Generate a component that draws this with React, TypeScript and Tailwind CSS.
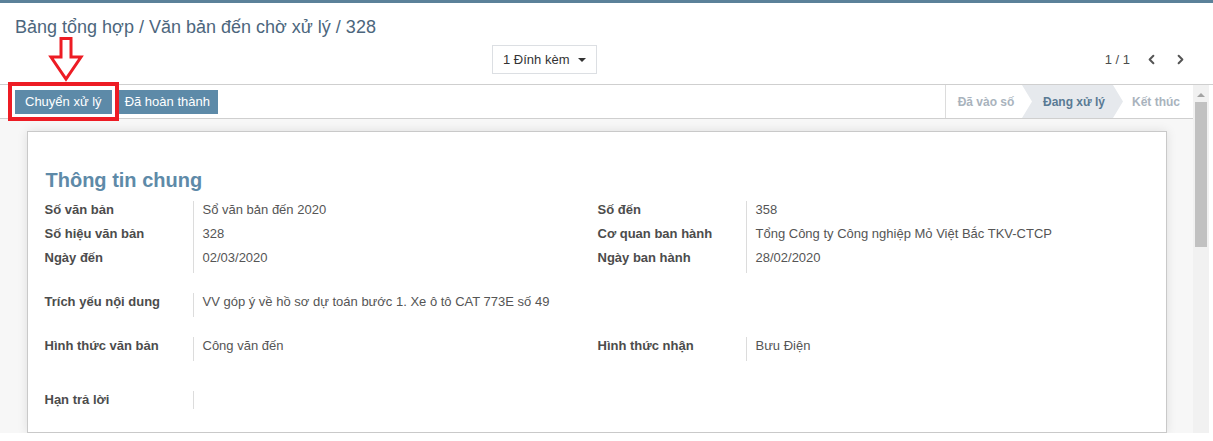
import { ChevronLeft, ChevronRight } from 'lucide-react'

const leftFields = [
  { label: 'Số văn bản', value: 'Sổ văn bản đến 2020' },
  { label: 'Số hiệu văn bản', value: '328' },
  { label: 'Ngày đến', value: '02/03/2020' },
]

const rightFields = [
  { label: 'Số đến', value: '358' },
  { label: 'Cơ quan ban hành', value: 'Tổng Công ty Công nghiệp Mỏ Việt Bắc TKV-CTCP' },
  { label: 'Ngày ban hành', value: '28/02/2020' },
]

function Field({ label, value, h = 'h-[24px]' }: { label: string; value?: string; h?: string }) {
  return (
    <div className={`flex ${h}`}>
      <div className="w-[149px] flex-none border-r border-[#dcdcdc] font-bold text-[#4c4c4c] leading-[18px]">
        {label}
      </div>
      <div className="pl-[9px] text-[#555] leading-[18px]">{value}</div>
    </div>
  )
}

export default function App() {
  return (
    <div className="relative w-[1213px] h-[441px] bg-white overflow-hidden font-['Liberation_Sans',Arial,sans-serif] text-[13px]">
      {/* control panel */}
      <header className="h-[85px] border-b border-[#cfcfcf] flex flex-col">
        <div className="h-[3px] bg-[#5b8199]" />
        <div className="pl-[15px] pt-[13px] text-[18px] leading-[22px] text-[#4c667d]">
          Bảng tổng hợp / Văn bản đến chờ xử lý / 328
        </div>
        <div className="flex items-center mt-[7px] pr-[25px]">
          <div className="w-[492px] flex-none" />
          <button className="h-[29px] px-[10px] border border-[#dcdfe3] bg-white text-[#333] flex items-center gap-[9px]">
            <span>1 Đính kèm</span>
            <span className="w-0 h-0 border-x-[4px] border-x-transparent border-t-[4px] border-t-[#333]" />
          </button>
          <div className="ml-auto flex items-center text-[#4c4c4c]">
            <span className="mr-[14px]">1 / 1</span>
            <ChevronLeft size={15} strokeWidth={3.2} className="text-[#555] mr-[14px]" />
            <ChevronRight size={15} strokeWidth={3.2} className="text-[#555]" />
          </div>
        </div>
      </header>

      {/* content */}
      <div className="flex h-[348px]">
        <main className="w-[1193px] flex-none flex flex-col">
          <div className="relative h-[34px] flex-none bg-white border-b border-[#cfcfcf] flex items-center">
            <div className="flex gap-[5px] pl-[15px]">
              <button className="h-[24px] px-[10px] bg-[#5d8aa8] text-white">Chuyển xử lý</button>
              <button className="h-[24px] px-[8px] bg-[#5d8aa8] text-white">Đã hoàn thành</button>
            </div>
            <div className="ml-auto h-full flex border-l border-[#dcdcdc] text-[12px] font-bold">
              <div className="w-[76px] flex items-center justify-center pl-[4px] text-[#a9b3bd]">Đã vào số</div>
              <div className="w-[101px] flex items-center justify-center pl-[3px] bg-[#e6e9ed] text-[#597a94] [clip-path:polygon(0_0,calc(100%-10px)_0,100%_50%,calc(100%-10px)_100%,0_100%,10px_50%)]">
                Đang xử lý
              </div>
              <div className="w-[70px] flex items-center justify-center pr-[4px] text-[#a9b3bd]">Kết thúc</div>
            </div>
            <div className="absolute left-[8px] top-[-3px] w-[111px] h-[39px] border-[4px] border-[#ed1c24]" />
          </div>

          <div className="flex-1 bg-[#f7f7f7] pt-[12px] overflow-hidden">
            <div className="w-[1140px] mx-auto h-full bg-white border border-[#c9c9c9] shadow-[0_0_10px_rgba(0,0,0,0.1)] pl-[17px] pr-[15px] pt-[36px]">
              <h2 className="text-[20px] leading-[24px] font-bold text-[#5e8aa8] pl-[1px]">Thông tin chung</h2>
              <div className="grid grid-cols-2 mt-[9px]">
                <div>
                  {leftFields.map((f) => (
                    <Field key={f.label} {...f} />
                  ))}
                </div>
                <div>
                  {rightFields.map((f) => (
                    <Field key={f.label} {...f} />
                  ))}
                </div>
              </div>
              <div className="mt-[20px]">
                <Field label="Trích yếu nội dung" value="VV góp ý về hồ sơ dự toán bước 1. Xe ô tô CAT 773E số 49" />
              </div>
              <div className="grid grid-cols-2 mt-[20px]">
                <Field label="Hình thức văn bản" value="Công văn đến" />
                <Field label="Hình thức nhận" value="Bưu Điện" />
              </div>
              <div className="mt-[30px]">
                <Field label="Hạn trả lời" h="h-[18px]" />
              </div>
            </div>
          </div>
        </main>

        {/* scrollbar */}
        <div className="w-[16px] flex-none bg-[#f1f1f1] flex flex-col items-center">
          <div className="mt-[8px] w-0 h-0 border-x-[4px] border-x-transparent border-b-[4px] border-b-[#a3a3a3]" />
          <div className="mt-[5px] w-[12px] h-[145px] bg-[#c1c1c1]" />
        </div>
      </div>

      {/* annotation arrow */}
      <svg className="absolute left-[48px] top-[35px]" width="38" height="48" viewBox="0 0 38 48">
        <polygon
          points="13,3.5 23,3.5 23,22 33,22 18,44 3,22 13,22"
          fill="none"
          stroke="#ed1c24"
          strokeWidth="3"
          strokeLinejoin="miter"
        />
      </svg>
    </div>
  )
}
